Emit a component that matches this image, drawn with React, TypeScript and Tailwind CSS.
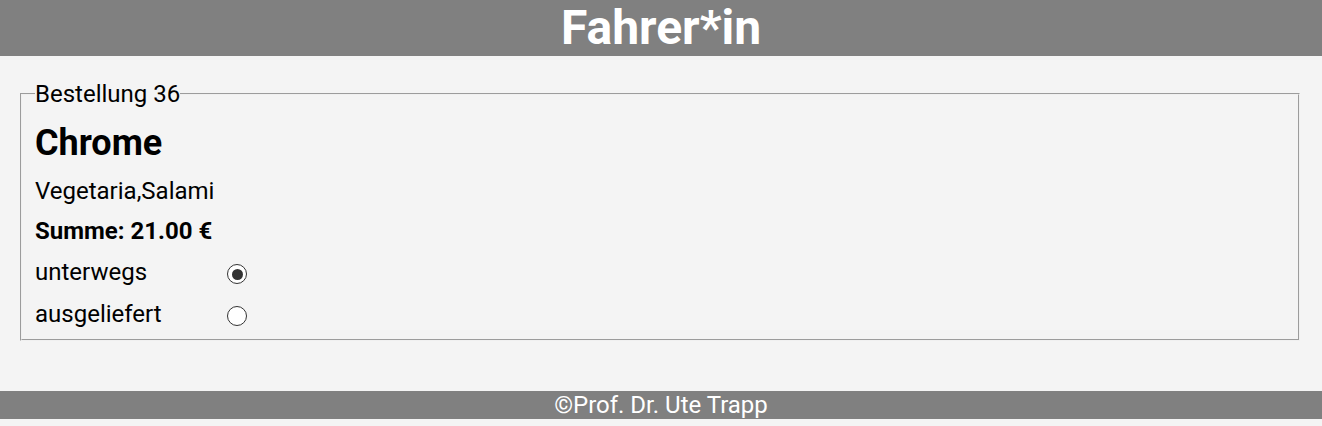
import React from 'react';

function Radio({ checked }: { checked?: boolean }) {
  return (
    <span className="mt-[4px] flex h-[20px] w-[20px] items-center justify-center rounded-full border-[1.5px] border-[#333] bg-white">
      {checked && <span className="h-[11px] w-[11px] rounded-full bg-[#333]" />}
    </span>
  );
}

export default function App() {
  const status = 'unterwegs';
  return (
    <div className="min-h-[426px] bg-[#f4f4f4] font-['Roboto',sans-serif] text-[24px] text-black">
      <header className="flex h-[56px] items-center justify-center bg-[#808080]">
        <h1 className="text-[48px] font-bold leading-none text-white">Fahrer*in</h1>
      </header>

      <main className="pt-[26px] pb-[50px] pl-[20px] pr-[22px]">
        <fieldset className="border-2 border-[#f0f0f0] pl-[13px] pr-[12px] pb-[13px] [border-style:groove]">
          <legend className="px-0 leading-[24px]">Bestellung 36</legend>
          <h2 className="mt-[19px] text-[36px] font-bold leading-[36px]">Chrome</h2>
          <p className="mt-[18px] leading-[24px]">Vegetaria,Salami</p>
          <p className="mt-[16px] font-bold leading-[24px]">Summe: 21.00 €</p>
          <form className="mt-[17px] flex flex-col gap-[18px]">
            {['unterwegs', 'ausgeliefert'].map((s) => (
              <label key={s} className="flex items-start">
                <span className="w-[192px] leading-[24px]">{s}</span>
                <Radio checked={s === status} />
              </label>
            ))}
          </form>
        </fieldset>
      </main>

      <footer className="flex h-[28px] items-center justify-center bg-[#808080] leading-none text-white">
        ©Prof. Dr. Ute Trapp
      </footer>
    </div>
  );
}
